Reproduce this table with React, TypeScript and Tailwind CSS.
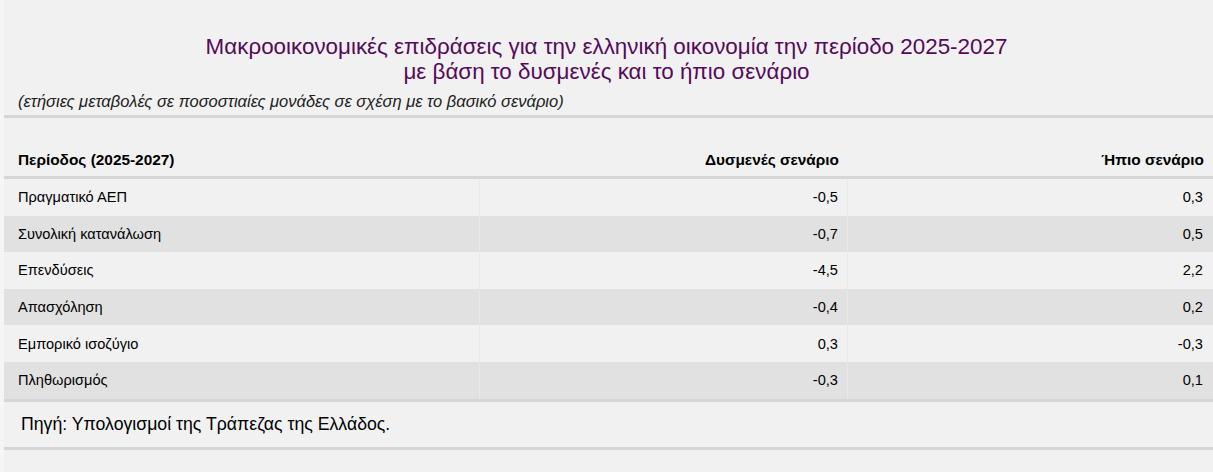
const rows = [
  { label: "Πραγματικό ΑΕΠ", adverse: "-0,5", mild: "0,3" },
  { label: "Συνολική κατανάλωση", adverse: "-0,7", mild: "0,5" },
  { label: "Επενδύσεις", adverse: "-4,5", mild: "2,2" },
  { label: "Απασχόληση", adverse: "-0,4", mild: "0,2" },
  { label: "Εμπορικό ισοζύγιο", adverse: "0,3", mild: "-0,3" },
  { label: "Πληθωρισμός", adverse: "-0,3", mild: "0,1" },
]

export default function App() {
  return (
    <div
      className="w-[1213px] h-[472px] bg-[#f5f5f5] pl-[4px] overflow-hidden text-black"
      style={{ fontFamily: '"Liberation Sans", Arial, sans-serif' }}
    >
      <div className="h-full bg-[#f1f1f1]">
        {/* Title */}
        <div className="pt-[34px] pr-[4px] text-center text-[22.4px] leading-[25px] text-[#560a5c]">
          <div>Μακροοικονομικές επιδράσεις για την ελληνική οικονομία την περίοδο 2025-2027</div>
          <div>με βάση το δυσμενές και το ήπιο σενάριο</div>
        </div>
        <div className="mt-[7px] pl-[14px] text-[16.5px] leading-[20px] italic text-[#222]">
          (ετήσιες μεταβολές σε ποσοστιαίες μονάδες σε σχέση με το βασικό σενάριο)
        </div>

        {/* Table */}
        <div className="mt-[4px] border-t-[3px] border-[#d6d6d6]">
          <div className="grid grid-cols-[476px_368px_1fr] h-[58px] items-end pb-[6px] text-[15.4px] font-bold leading-[20px]">
            <div className="pl-[14px]">Περίοδος (2025-2027)</div>
            <div className="text-right pr-[9px]">Δυσμενές σενάριο</div>
            <div className="text-right pr-[9px]">Ήπιο σενάριο</div>
          </div>
          <div className="border-t-[3px] border-[#d6d6d6]">
            {rows.map((r, i) => (
              <div
                key={r.label}
                className={`grid grid-cols-[476px_368px_1fr] h-[36.6px] items-center text-[14.6px] leading-[20px] ${
                  i % 2 === 1 ? "bg-[#e1e1e1]" : "bg-[#f1f1f1]"
                }`}
              >
                <div className="pl-[14px] h-full flex items-center border-r border-[#e8e8e8]">{r.label}</div>
                <div className="pr-[9px] h-full flex items-center justify-end border-r border-[#e8e8e8]">{r.adverse}</div>
                <div className="pr-[6px] mr-[4px] h-full flex items-center justify-end">{r.mild}</div>
              </div>
            ))}
          </div>
          <div className="border-t-[3px] border-[#d6d6d6] h-[48px] flex items-center pl-[17px] text-[17.7px]">
            Πηγή: Υπολογισμοί της Τράπεζας της Ελλάδος.
          </div>
          <div className="border-t-[3px] border-[#d6d6d6]" />
        </div>
      </div>
    </div>
  )
}
